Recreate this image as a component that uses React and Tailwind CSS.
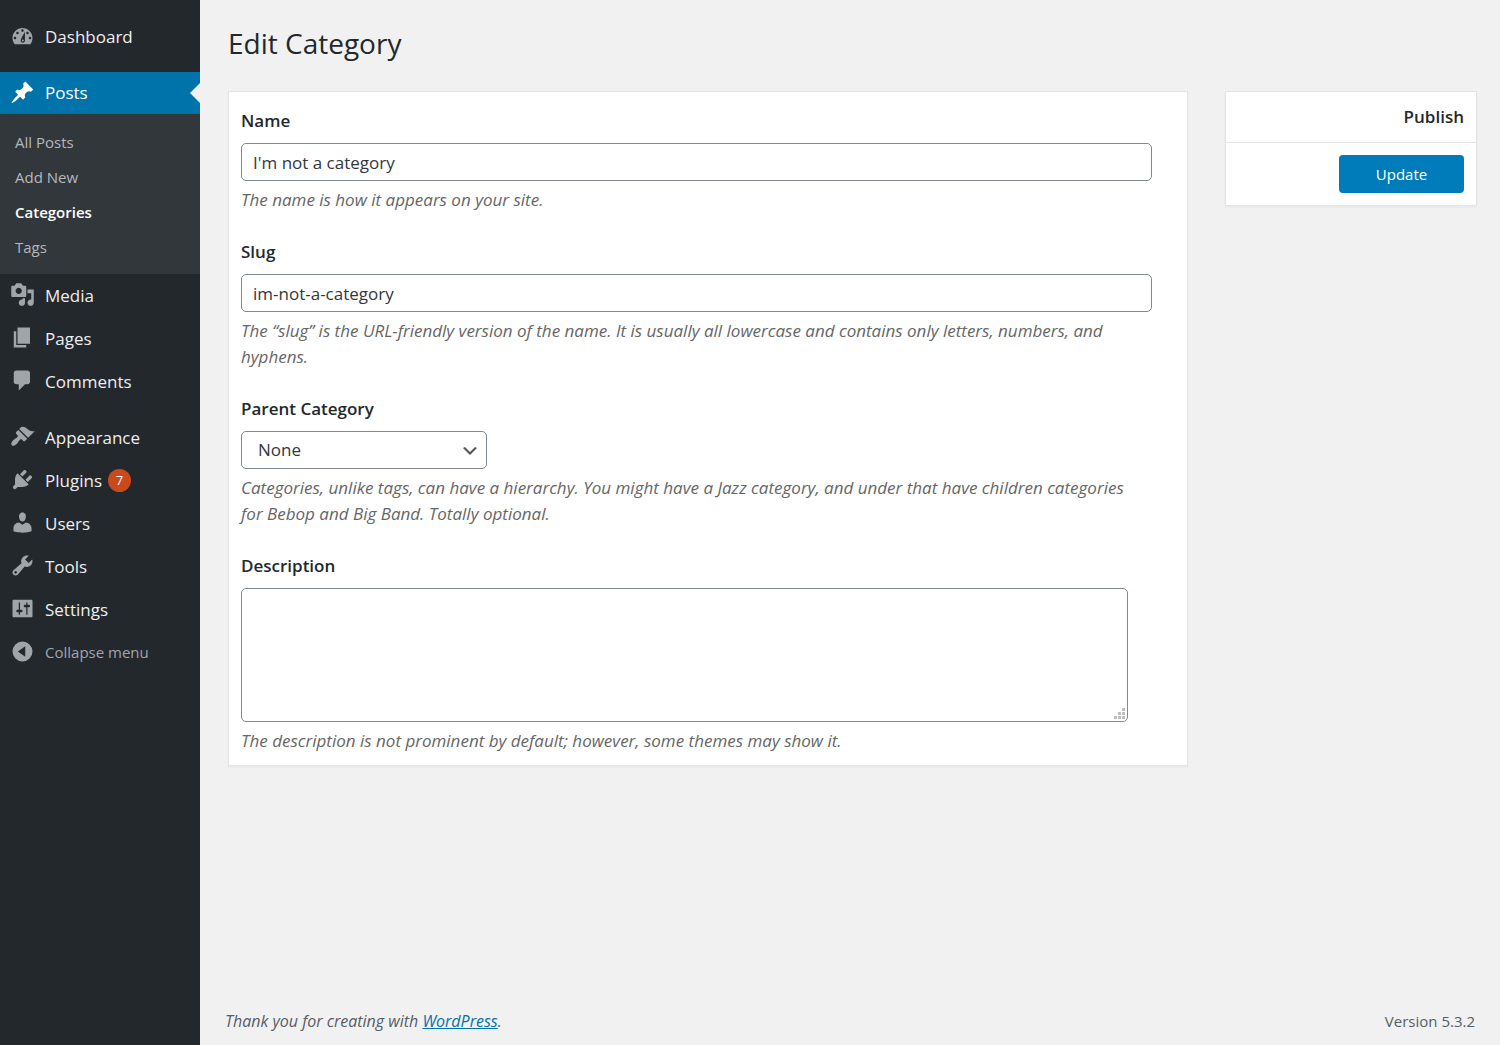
import React from "react";

const ICONS = {
  dashboard:
    "M3.76 17h12.48c1.1-1.37 1.76-3.11 1.76-5 0-4.42-3.58-8-8-8s-8 3.58-8 8c0 1.89.66 3.63 1.76 5zM9 6c0-.55.45-1 1-1s1 .45 1 1-.45 1-1 1-1-.45-1-1zM5 8c0-.55.45-1 1-1s1 .45 1 1-.45 1-1 1-1-.45-1-1zM8.52 13.98c0-1.1 3.48-6.98 3.48-6.98s-.02 5.88 0 6.98c0 .97-.78 1.75-1.74 1.75s-1.74-.78-1.74-1.75zM13 8c0-.55.45-1 1-1s1 .45 1 1-.45 1-1 1-1-.45-1-1zM3 12c0-.55.45-1 1-1s1 .45 1 1-.45 1-1 1-1-.45-1-1zM15 12c0-.55.45-1 1-1s1 .45 1 1-.45 1-1 1-1-.45-1-1zM9.5 13.98c0 .45.35.8.76.8s.76-.35.76-.8-.35-.76-.76-.76-.76.31-.76.76z",
  post: "M10.44 3.02l1.82-1.82 6.36 6.35-1.83 1.82c-1.05-.68-2.48-.57-3.41.36l-.75.75c-.92.93-1.04 2.35-.35 3.41l-1.83 1.82-2.41-2.41-2.8 2.79c-.42.42-3.38 2.71-3.8 2.29s1.86-3.39 2.28-3.81l2.79-2.79L4.1 9.36l1.83-1.82c1.05.69 2.48.57 3.4-.36l.75-.75c.93-.92 1.05-2.35.36-3.41z",
  media:
    "M13 11V4c0-.55-.45-1-1-1h-1.67L9 1H5L3.67 3H2c-.55 0-1 .45-1 1v7c0 .55.45 1 1 1h10c.55 0 1-.45 1-1zM7 4.5c1.38 0 2.5 1.12 2.5 2.5S8.38 9.5 7 9.5 4.5 8.38 4.5 7 5.62 4.5 7 4.5zM14 6h5v10.5c0 1.38-1.12 2.5-2.5 2.5S14 17.88 14 16.5s1.12-2.5 2.5-2.5c.17 0 .34.02.5.05V9h-3V6zm-4 8.05V13h2v3.5c0 1.38-1.12 2.5-2.5 2.5S7 17.88 7 16.5 8.12 14 9.5 14c.17 0 .34.02.5.05z",
  page: "M6 15V2h10v13H6zm-1 1h8v2H3V5h2v11z",
  comments:
    "M5 2h9c1.1 0 2 .9 2 2v7c0 1.1-.9 2-2 2h-2l-5 5v-5H5c-1.1 0-2-.9-2-2V4c0-1.1.9-2 2-2z",
  appearance:
    "M14.48 11.06L7.41 3.99l1.5-1.5c.5-.56 2.3-.47 3.51.32 1.21.8 1.43 1.28 2.91 2.1 1.18.64 2.45 1.26 4.45.85zm-.71.71L6.7 4.7 4.93 6.47c-.39.39-.39 1.02 0 1.41l1.06 1.06c.39.39.39 1.03 0 1.42-.6.6-1.43 1.11-2.21 1.69-.35.26-.7.53-1.01.84C1.43 14.23.4 16.08 1.4 17.07c.99 1 2.84-.03 4.18-1.36.31-.31.58-.66.85-1.02.57-.78 1.08-1.61 1.69-2.21.39-.39 1.02-.39 1.41 0l1.06 1.06c.39.39 1.02.39 1.41 0z",
  plugins:
    "M13.11 4.36L9.87 7.6 8 5.73l3.24-3.24c.35-.34 1.05-.2 1.56.32.52.51.66 1.21.31 1.55zm-8 1.77l.91-1.12 9.01 9.01-1.19.84c-.71.71-2.63 1.16-3.82 1.16H6.14L4.9 17.26c-.59.59-1.54.59-2.12 0-.59-.58-.59-1.53 0-2.12l1.24-1.24v-3.88c0-1.13.4-3.19 1.09-3.89zm7.26 3.97l3.24-3.24c.34-.35 1.04-.21 1.55.31.52.51.66 1.21.31 1.55l-3.24 3.25z",
  users:
    "M10 9.25c-2.27 0-2.73-3.44-2.73-3.44C7 4.02 7.82 2 9.97 2c2.16 0 2.98 2.02 2.71 3.81 0 0-.41 3.44-2.68 3.44zm0 2.57L12.72 10c2.39 0 4.52 2.33 4.52 4.53v2.49s-3.65 1.13-7.24 1.13c-3.65 0-7.24-1.13-7.24-1.13v-2.49c0-2.25 1.94-4.48 4.47-4.48z",
  tools:
    "M16.68 9.77c-1.34 1.34-3.3 1.67-4.95.99l-5.41 6.52c-.99.99-2.59.99-3.58 0s-.99-2.59 0-3.57l6.52-5.42c-.68-1.65-.35-3.61.99-4.95 1.28-1.28 3.12-1.62 4.72-1.06l-2.89 2.89 2.82 2.82 2.86-2.87c.53 1.58.18 3.39-1.08 4.65zM3.81 16.21c.4.39 1.04.39 1.43 0 .4-.4.4-1.04 0-1.43-.39-.4-1.03-.4-1.43 0-.39.39-.39 1.03 0 1.43z",
  settings:
    "M18 16V4c0-.55-.45-1-1-1H3c-.55 0-1 .45-1 1v12c0 .55.45 1 1 1h14c.55 0 1-.45 1-1zM8 11h1c.55 0 1 .45 1 1s-.45 1-1 1H8v1.5c0 .28-.22.5-.5.5s-.5-.22-.5-.5V13H6c-.55 0-1-.45-1-1s.45-1 1-1h1V5.5c0-.28.22-.5.5-.5s.5.22.5.5V11zm5-2h-1c-.55 0-1-.45-1-1s.45-1 1-1h1V5.5c0-.28.22-.5.5-.5s.5.22.5.5V7h1c.55 0 1 .45 1 1s-.45 1-1 1h-1v5.5c0 .28-.22.5-.5.5s-.5-.22-.5-.5V9z",
  collapse:
    "M10 2a8 8 0 1 0 0 16 8 8 0 0 0 0-16zM12.2 5.8v8.4L6.3 10z",
};

function Icon({ name, className }) {
  return (
    <svg
      viewBox="0 0 20 20"
      className={"mb-[2px] h-[25px] w-[25px] shrink-0 " + className}
      fill="currentColor"
      fillRule="evenodd"
      aria-hidden="true"
    >
      <path d={ICONS[name]} />
    </svg>
  );
}

function MenuItem({ icon, label, badge }) {
  return (
    <li>
      <a href="#" className="flex h-[43px] items-center pl-[10px] text-[17px] text-[#eeeeee]">
        <Icon name={icon} className="text-[#a0a5aa]" />
        <span className="ml-[10px]">{label}</span>
        {badge && (
          <span className="ml-[6px] flex h-[23px] w-[23px] items-center justify-center rounded-full bg-[#ca4a1f] text-[13px] text-white">
            {badge}
          </span>
        )}
      </a>
    </li>
  );
}

function Sidebar() {
  return (
    <nav aria-label="Main menu" className="w-[200px] shrink-0 bg-[#23282d] pt-[15px]">
      <ul>
        <MenuItem icon="dashboard" label="Dashboard" />
        <li className="mt-[14px]">
          <a
            href="#"
            className="relative flex h-[42px] items-center bg-[#0073aa] pl-[10px] text-[17px] text-white"
          >
            <Icon name="post" className="text-white" />
            <span className="ml-[10px]">Posts</span>
            <span className="absolute right-0 top-[11px] border-y-10 border-r-10 border-y-transparent border-r-[#f1f1f1]" />
          </a>
          <ul className="bg-[#32373c] pt-[11px] pb-[9px] text-[15px] text-[#b4b9be]">
            {["All Posts", "Add New", "Categories", "Tags"].map((t) => (
              <li key={t}>
                <a
                  href="#"
                  className={
                    "flex h-[35px] items-center pl-[15px] " +
                    (t === "Categories" ? "font-semibold text-white" : "")
                  }
                >
                  {t}
                </a>
              </li>
            ))}
          </ul>
        </li>
        <MenuItem icon="media" label="Media" />
        <MenuItem icon="page" label="Pages" />
        <MenuItem icon="comments" label="Comments" />
      </ul>
      <ul className="mt-[13px]">
        <MenuItem icon="appearance" label="Appearance" />
        <MenuItem icon="plugins" label="Plugins" badge="7" />
        <MenuItem icon="users" label="Users" />
        <MenuItem icon="tools" label="Tools" />
        <MenuItem icon="settings" label="Settings" />
      </ul>
      <button
        type="button"
        className="flex h-[43px] w-full items-center pl-[10px] text-[15px] text-[#a0a5aa]"
      >
        <Icon name="collapse" className="text-[#a0a5aa]" />
        <span className="ml-[10px]">Collapse menu</span>
      </button>
    </nav>
  );
}

const CONTROL =
  "block rounded-[5px] border border-[#7e8993] bg-white text-[17px] text-[#32373c]";

function Field({ id, label, help, children }) {
  return (
    <div>
      <label htmlFor={id} className="mb-[9px] block text-[17px] leading-[26px] font-semibold text-[#23282d]">
        {label}
      </label>
      {children}
      <p id={id + "-help"} className="mt-[6px] w-[96%] text-[17px] leading-[26px] text-[#666666] italic">
        {help}
      </p>
    </div>
  );
}

function EditForm() {
  return (
    <form
      id="edit-category"
      className="flex min-w-0 flex-1 flex-col gap-[26px] border border-[#e2e4e7] bg-white px-3 pt-4 pb-[11px] shadow-xs"
    >
      <Field id="name" label="Name" help="The name is how it appears on your site.">
        <input
          id="name"
          type="text"
          aria-describedby="name-help"
          defaultValue="I'm not a category"
          className={CONTROL + " h-[38px] w-[97.5%] px-[11px]"}
        />
      </Field>
      <Field
        id="slug"
        label="Slug"
        help="The “slug” is the URL-friendly version of the name. It is usually all lowercase and contains only letters, numbers, and hyphens."
      >
        <input
          id="slug"
          type="text"
          aria-describedby="slug-help"
          defaultValue="im-not-a-category"
          className={CONTROL + " h-[38px] w-[97.5%] px-[11px]"}
        />
      </Field>
      <Field
        id="parent"
        label="Parent Category"
        help="Categories, unlike tags, can have a hierarchy. You might have a Jazz category, and under that have children categories for Bebop and Big Band. Totally optional."
      >
        <div className="relative w-[246px]">
          <select
            id="parent"
            aria-describedby="parent-help"
            className={CONTROL + " h-[38px] w-full appearance-none pr-8 pl-4"}
          >
            <option>None</option>
          </select>
          <svg
            viewBox="0 0 20 20"
            className="pointer-events-none absolute top-[10px] right-[7px] h-5 w-5"
            fill="#555555"
            aria-hidden="true"
          >
            <path d="M5 6l5 5 5-5 2 1-7 7-7-7 2-1z" />
          </svg>
        </div>
      </Field>
      <Field
        id="description"
        label="Description"
        help="The description is not prominent by default; however, some themes may show it."
      >
        <div className="relative w-[95%]">
          <textarea
            id="description"
            aria-describedby="description-help"
            className={CONTROL + " h-[134px] w-full resize-none px-[11px] py-1"}
          />
          <svg
            viewBox="0 0 11 11"
            className="pointer-events-none absolute right-[3px] bottom-[3px] h-[11px] w-[11px]"
            fill="#bfbfbf"
            aria-hidden="true"
          >
            <path d="M8 0h3v3H8zM4 4h3v3H4zM8 4h3v3H8zM0 8h3v3H0zM4 8h3v3H4zM8 8h3v3H8z" />
          </svg>
        </div>
      </Field>
    </form>
  );
}

export default function App() {
  return (
    <div className="flex min-h-screen bg-[#f1f1f1] font-['Open_Sans',sans-serif] text-[#444444]">
      <Sidebar />
      <div className="flex min-w-0 flex-1 flex-col">
        <main className="flex-1 pt-[25px] pr-[23px] pl-7">
          <h1 className="text-[28px] leading-9 text-[#23282d]">Edit Category</h1>
          <div className="mt-[30px] flex items-start gap-[37px]">
            <EditForm />
            <aside className="w-[252px] shrink-0 border border-[#e2e4e7] bg-white text-right shadow-xs">
              <h2 className="border-b border-[#e2e4e7] px-3 py-3 text-[17px] leading-[26px] font-semibold text-[#23282d]">
                Publish
              </h2>
              <div className="flex justify-end p-3">
                <button
                  type="submit"
                  form="edit-category"
                  className="h-[38px] w-[125px] rounded-[4px] bg-[#007cba] text-[15px] text-white"
                >
                  Update
                </button>
              </div>
            </aside>
          </div>
        </main>
        <footer className="flex justify-between px-[25px] pb-3 text-[15px] leading-[24px] text-[#555d66]">
          <p className="text-[16px] italic">
            Thank you for creating with{" "}
            <a href="#" className="text-[#0073aa] underline">
              WordPress
            </a>
            .
          </p>
          <p>Version 5.3.2</p>
        </footer>
      </div>
    </div>
  );
}
